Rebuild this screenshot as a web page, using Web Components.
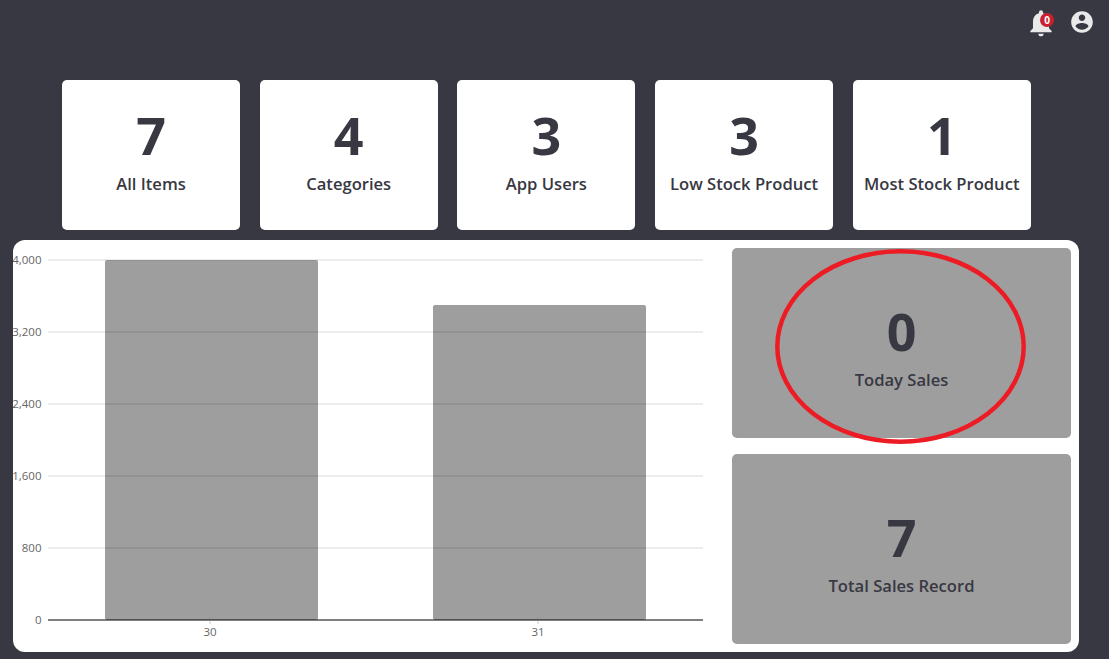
<!DOCTYPE html>
<html lang="en">
<head>
<meta charset="utf-8">
<title>Dashboard</title>
<style>
  html, body { margin: 0; height: 100%; }
  body { background: #383842; font-family: "Open Sans", "Noto Sans", sans-serif; overflow: hidden; }
</style>
</head>
<body>
<dash-board>
  <top-bar slot="top" count="0"></top-bar>
  <stat-card slot="stats"><span slot="value">7</span>All Items</stat-card>
  <stat-card slot="stats"><span slot="value">4</span>Categories</stat-card>
  <stat-card slot="stats"><span slot="value">3</span>App Users</stat-card>
  <stat-card slot="stats"><span slot="value">3</span>Low Stock Product</stat-card>
  <stat-card slot="stats"><span slot="value">1</span>Most Stock Product</stat-card>
  <sales-chart slot="chart"></sales-chart>
  <stat-card slot="side" tone="grey" circled><span slot="value">0</span>Today Sales</stat-card>
  <stat-card slot="side" tone="grey"><span slot="value">7</span>Total Sales Record</stat-card>
</dash-board>

<script>
// Barra superior con campana y usuario
class TopBar extends HTMLElement {
  constructor() {
    super();
    this.attachShadow({ mode: 'open' });
    this.shadowRoot.innerHTML = `
      <style>
        :host { display: flex; justify-content: flex-end; align-items: flex-start; height: 80px; padding-right: 14px; box-sizing: border-box; }
        .bell { position: relative; width: 32px; height: 32px; margin-top: 7px; margin-right: 12px; }
        .user { width: 26px; height: 26px; margin-top: 9px; }
        svg { display: block; fill: #e9e9e9; width: 100%; height: 100%; }
        .badge {
          position: absolute; left: 15px; top: 6px; width: 14px; height: 14px; border-radius: 50%;
          background: #c9202f; color: #fff; font: 700 10px/14px "Open Sans", sans-serif; text-align: center;
        }
      </style>
      <div class="bell">
        <svg viewBox="0 0 24 24"><path d="M12 22c1.1 0 2-.9 2-2h-4c0 1.1.89 2 2 2zm6-6v-5c0-3.07-1.64-5.64-4.5-6.32V4c0-.83-.67-1.5-1.5-1.5s-1.5.67-1.5 1.5v.68C7.63 5.36 6 7.92 6 11v5l-2 2v1h16v-1l-2-2z"/></svg>
        <span class="badge">${this.getAttribute('count')}</span>
      </div>
      <div class="user">
        <svg viewBox="0 0 24 24"><path d="M12 2C6.48 2 2 6.48 2 12s4.48 10 10 10 10-4.48 10-10S17.52 2 12 2zm0 3c1.66 0 3 1.34 3 3s-1.34 3-3 3-3-1.34-3-3 1.34-3 3-3zm0 14.2c-2.5 0-4.71-1.28-6-3.22.03-1.99 4-3.08 6-3.08 1.99 0 5.97 1.09 6 3.08-1.29 1.94-3.5 3.22-6 3.22z"/></svg>
      </div>
    `;
  }
}

// Tarjeta con numero y etiqueta
class StatCard extends HTMLElement {
  constructor() {
    super();
    this.attachShadow({ mode: 'open' });
    const ring = this.hasAttribute('circled')
      ? '<svg class="ring" width="252" height="200"><ellipse cx="125.5" cy="98.5" rx="123.2" ry="95.2" fill="none" stroke="#ed1c24" stroke-width="4.5"/></svg>'
      : '';
    this.shadowRoot.innerHTML = `
      <style>
        :host {
          display: flex; position: relative; flex-direction: column; align-items: center; justify-content: center;
          box-sizing: border-box; background: #fff; color: #383842; border-radius: 5px; text-align: center;
          font-size: 16.6px; font-weight: 600; line-height: 24px; white-space: nowrap; padding-bottom: 10px;
        }
        :host([tone="grey"]) { background: #9e9e9e; padding-bottom: 0; padding-top: 6px; }
        .value { font-size: 52px; font-weight: 700; line-height: 62px; margin-bottom: 6px; }
        .ring { position: absolute; left: 43px; top: 0; }
      </style>
      <div class="value"><slot name="value"></slot></div>
      <div><slot></slot></div>
      ${ring}
    `;
  }
}

// Grafico de barras
class SalesChart extends HTMLElement {
  constructor() {
    super();
    this.attachShadow({ mode: 'open' });
    const ticks = [['4,000', 20], ['3,200', 92], ['2,400', 164], ['1,600', 236], ['800', 308]];
    const grid = ticks.map(([t, y]) => `
      <line x1="35" x2="690" y1="${y}" y2="${y}" stroke="#000" stroke-opacity=".07" stroke-width="2"/>
      <text x="28.5" y="${y + 4}" text-anchor="end">${t}</text>`).join('');
    this.shadowRoot.innerHTML = `
      <style>
        :host { display: block; width: 719px; height: 412px; overflow: hidden; }
        svg { display: block; }
        text { font: 11.5px "Open Sans", sans-serif; fill: #666; }
      </style>
      <svg width="719" height="412" viewBox="0 0 719 412">
        <rect x="92" y="20" width="213" height="360" rx="2" fill="#9e9e9e"/>
        <rect x="420" y="65" width="213" height="315" rx="2" fill="#9e9e9e"/>
        ${grid}
        <line x1="35" x2="690" y1="380" y2="380" stroke="#000" stroke-opacity=".5" stroke-width="2"/>
        <line x1="197" x2="197" y1="381" y2="384" stroke="#ccc"/>
        <line x1="525" x2="525" y1="381" y2="384" stroke="#ccc"/>
        <text x="28.5" y="384" text-anchor="end">0</text>
        <text x="197" y="396" text-anchor="middle">30</text>
        <text x="525" y="396" text-anchor="middle">31</text>
      </svg>
    `;
  }
}

// Composicion general
class DashBoard extends HTMLElement {
  constructor() {
    super();
    this.attachShadow({ mode: 'open' });
    this.shadowRoot.innerHTML = `
      <style>
        :host { display: block; }
        .stats { display: grid; grid-template-columns: repeat(5, 178px); grid-auto-rows: 150px; column-gap: 19.7px; padding-left: 62px; margin-bottom: 10px; }
        .panel {
          display: flex; margin-left: 13px; width: 1066px; height: 412px; background: #fff; border-radius: 12px; overflow: hidden;
        }
        .side { display: grid; grid-template-rows: 190px 190px; grid-template-columns: 339px; gap: 16px; padding: 8px 0 0 0; }
      </style>
      <slot name="top"></slot>
      <div class="stats"><slot name="stats"></slot></div>
      <div class="panel">
        <slot name="chart"></slot>
        <div class="side"><slot name="side"></slot></div>
      </div>
    `;
  }
}

customElements.define('top-bar', TopBar);
customElements.define('stat-card', StatCard);
customElements.define('sales-chart', SalesChart);
customElements.define('dash-board', DashBoard);
</script>
</body>
</html>
